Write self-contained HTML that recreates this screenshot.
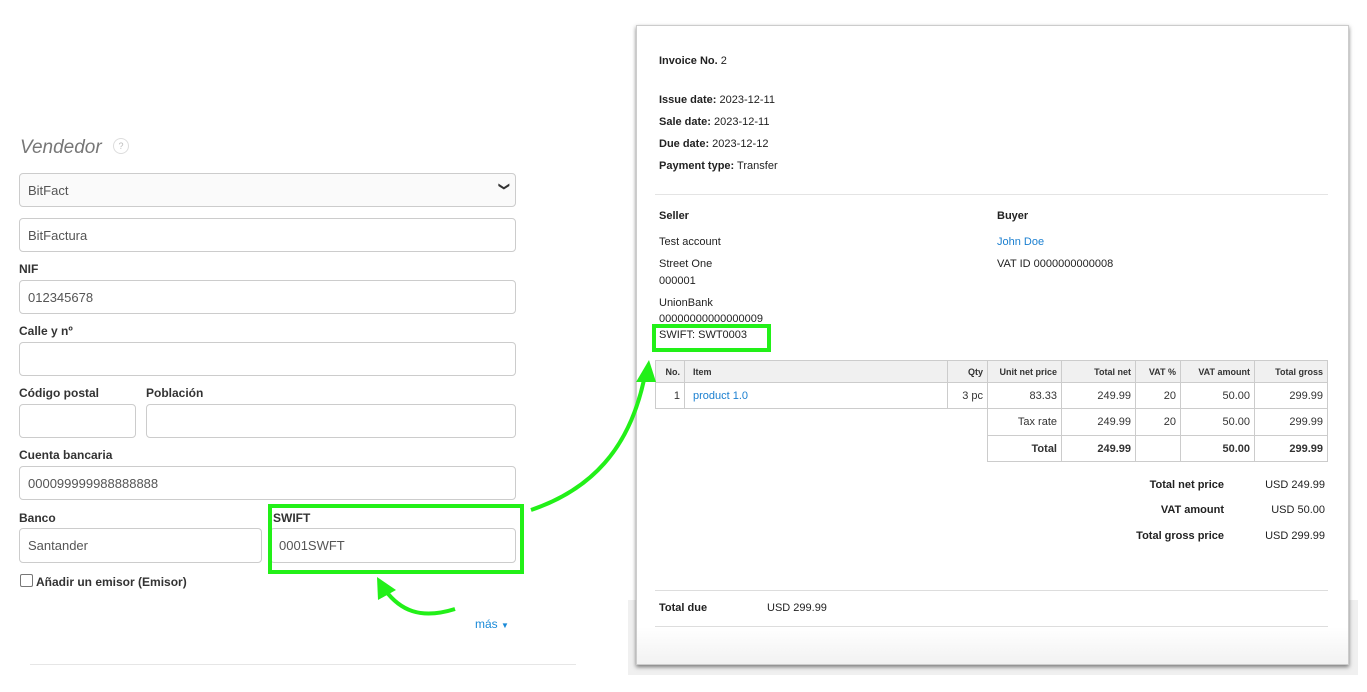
<!DOCTYPE html>
<html><head><meta charset="utf-8"><style>
*{margin:0;padding:0;box-sizing:border-box}
body{width:1367px;height:692px;background:#fff;position:relative;overflow:hidden;font-family:"Liberation Sans",Arial,sans-serif;color:#333}
.a{position:absolute;white-space:nowrap}
.in{position:absolute;border:1px solid #ccc;border-radius:4px;background:#fff;font-size:13px;color:#555;padding-left:8px;display:flex;align-items:center}
.lb{position:absolute;font-size:12px;font-weight:bold;color:#333}
.s{font-size:11px;color:#222}
.s b{font-weight:bold}
.t{position:absolute;border:1px solid #ccc;font-size:11px;display:flex;align-items:center;justify-content:flex-end;padding-right:4px;color:#333}
.h{background:#f0f0f0;font-size:9px;font-weight:bold}
.g{position:absolute;border:4px solid #22f018}
</style></head><body>
<div class="a" style="left:20px;top:137px;font-size:19px;font-style:italic;color:#777">Vendedor</div>
<div class="a" style="left:113px;top:138px;width:16px;height:16px;border:1px solid #ddd;border-radius:50%;font-size:9px;color:#bbb;text-align:center;line-height:14px">?</div>
<div class="in" style="left:19px;top:173px;width:497px;height:34px;background:#fafafa">BitFact<span style="position:absolute;right:6px;top:6px;font-size:11px;color:#333;transform:rotate(90deg)">&#10095;</span></div>
<div class="in" style="left:19px;top:218px;width:497px;height:34px">BitFactura</div>
<div class="lb" style="left:19px;top:262px">NIF</div>
<div class="in" style="left:19px;top:280px;width:497px;height:34px">012345678</div>
<div class="lb" style="left:19px;top:324px">Calle y nº</div>
<div class="in" style="left:19px;top:342px;width:497px;height:34px"></div>
<div class="lb" style="left:19px;top:386px">Código postal</div>
<div class="lb" style="left:146px;top:386px">Población</div>
<div class="in" style="left:19px;top:404px;width:117px;height:34px"></div>
<div class="in" style="left:146px;top:404px;width:370px;height:34px"></div>
<div class="lb" style="left:19px;top:448px">Cuenta bancaria</div>
<div class="in" style="left:19px;top:466px;width:497px;height:34px">000099999988888888</div>
<div class="lb" style="left:19px;top:511px">Banco</div>
<div class="lb" style="left:273px;top:511px">SWIFT</div>
<div class="in" style="left:19px;top:528px;width:243px;height:35px">Santander</div>
<div class="in" style="left:270px;top:528px;width:246px;height:35px">0001SWFT</div>
<div class="g" style="left:268px;top:504px;width:256px;height:70px"></div>
<div class="a" style="left:20px;top:574px;width:13px;height:13px;border:1px solid #777;border-radius:2px"></div>
<div class="lb" style="left:36px;top:575px">Añadir un emisor (Emisor)</div>
<div class="a" style="left:475px;top:617px;font-size:12px;color:#1a8ad8">más <span style="font-size:8px">▼</span></div>
<div class="a" style="left:30px;top:664px;width:546px;height:1px;background:#e6e6e6"></div>

<div class="a" style="left:628px;top:600px;width:730px;height:75px;background:#f0f0f0"></div>
<div class="a" style="left:636px;top:25px;width:713px;height:640px;background:#fff;box-shadow:0 2px 4px rgba(0,0,0,.5);border:1px solid #ccc"></div>
<div class="a" style="left:637px;top:627px;width:711px;height:37px;background:linear-gradient(#fff,#f2f2f2)"></div>
<div class="a s" style="left:659px;top:55px"><b>Invoice No.</b> 2</div>
<div class="a s" style="left:659px;top:94px"><b>Issue date:</b> 2023-12-11</div>
<div class="a s" style="left:659px;top:116px"><b>Sale date:</b> 2023-12-11</div>
<div class="a s" style="left:659px;top:138px"><b>Due date:</b> 2023-12-12</div>
<div class="a s" style="left:659px;top:160px"><b>Payment type:</b> Transfer</div>
<div class="a" style="left:655px;top:194px;width:673px;height:1px;background:#e4e4e4"></div>
<div class="a s" style="left:659px;top:210px"><b>Seller</b></div>
<div class="a s" style="left:997px;top:210px"><b>Buyer</b></div>
<div class="a s" style="left:659px;top:236px">Test account</div>
<div class="a s" style="left:997px;top:236px;color:#1a7fd0">John Doe</div>
<div class="a s" style="left:659px;top:258px">Street One</div>
<div class="a s" style="left:997px;top:258px">VAT ID 0000000000008</div>
<div class="a s" style="left:659px;top:275px">000001</div>
<div class="a s" style="left:659px;top:297px">UnionBank</div>
<div class="a s" style="left:659px;top:313px">00000000000000009</div>
<div class="a s" style="left:659px;top:329px">SWIFT: SWT0003</div>
<div class="g" style="left:652px;top:324px;width:119px;height:28px"></div>

<div class="t h" style="left:655px;top:360px;width:30px;height:23px">No.</div>
<div class="t h" style="left:684px;top:360px;width:264px;height:23px;justify-content:flex-start;padding-left:8px">Item</div>
<div class="t h" style="left:947px;top:360px;width:41px;height:23px">Qty</div>
<div class="t h" style="left:987px;top:360px;width:75px;height:23px">Unit net price</div>
<div class="t h" style="left:1061px;top:360px;width:75px;height:23px">Total net</div>
<div class="t h" style="left:1135px;top:360px;width:46px;height:23px">VAT %</div>
<div class="t h" style="left:1180px;top:360px;width:75px;height:23px">VAT amount</div>
<div class="t h" style="left:1254px;top:360px;width:74px;height:23px">Total gross</div>

<div class="t" style="left:655px;top:382px;width:30px;height:27px">1</div>
<div class="t" style="left:684px;top:382px;width:264px;height:27px;justify-content:flex-start;padding-left:8px;color:#1a7fd0">product 1.0</div>
<div class="t" style="left:947px;top:382px;width:41px;height:27px">3 pc</div>
<div class="t" style="left:987px;top:382px;width:75px;height:27px">83.33</div>
<div class="t" style="left:1061px;top:382px;width:75px;height:27px">249.99</div>
<div class="t" style="left:1135px;top:382px;width:46px;height:27px">20</div>
<div class="t" style="left:1180px;top:382px;width:75px;height:27px">50.00</div>
<div class="t" style="left:1254px;top:382px;width:74px;height:27px">299.99</div>

<div class="t" style="left:987px;top:408px;width:75px;height:28px">Tax rate</div>
<div class="t" style="left:1061px;top:408px;width:75px;height:28px">249.99</div>
<div class="t" style="left:1135px;top:408px;width:46px;height:28px">20</div>
<div class="t" style="left:1180px;top:408px;width:75px;height:28px">50.00</div>
<div class="t" style="left:1254px;top:408px;width:74px;height:28px">299.99</div>

<div class="t" style="left:987px;top:435px;width:75px;height:27px;font-weight:bold">Total</div>
<div class="t" style="left:1061px;top:435px;width:75px;height:27px;font-weight:bold">249.99</div>
<div class="t" style="left:1135px;top:435px;width:46px;height:27px"></div>
<div class="t" style="left:1180px;top:435px;width:75px;height:27px;font-weight:bold">50.00</div>
<div class="t" style="left:1254px;top:435px;width:74px;height:27px;font-weight:bold">299.99</div>

<div class="a s" style="right:143px;top:479px;font-weight:bold">Total net price</div>
<div class="a s" style="right:42px;top:479px">USD 249.99</div>
<div class="a s" style="right:143px;top:504px;font-weight:bold">VAT amount</div>
<div class="a s" style="right:42px;top:504px">USD 50.00</div>
<div class="a s" style="right:143px;top:530px;font-weight:bold">Total gross price</div>
<div class="a s" style="right:42px;top:530px">USD 299.99</div>

<div class="a" style="left:655px;top:590px;width:673px;height:1px;background:#ddd"></div>
<div class="a s" style="left:659px;top:602px;font-weight:bold">Total due</div>
<div class="a s" style="left:767px;top:602px">USD 299.99</div>
<div class="a" style="left:655px;top:626px;width:673px;height:1px;background:#ddd"></div>

<svg class="a" style="left:0;top:0" width="1367" height="692">
<path d="M531 510 C590 490 630 450 645 375" stroke="#22f018" stroke-width="4" fill="none"/>
<polygon points="649,360 636,382 656,382" fill="#22f018"/>
<path d="M455 609 C420 620 400 610 385 590" stroke="#22f018" stroke-width="4" fill="none"/>
<polygon points="377,577 378,600 396,590" fill="#22f018"/>
</svg>
</body></html>
